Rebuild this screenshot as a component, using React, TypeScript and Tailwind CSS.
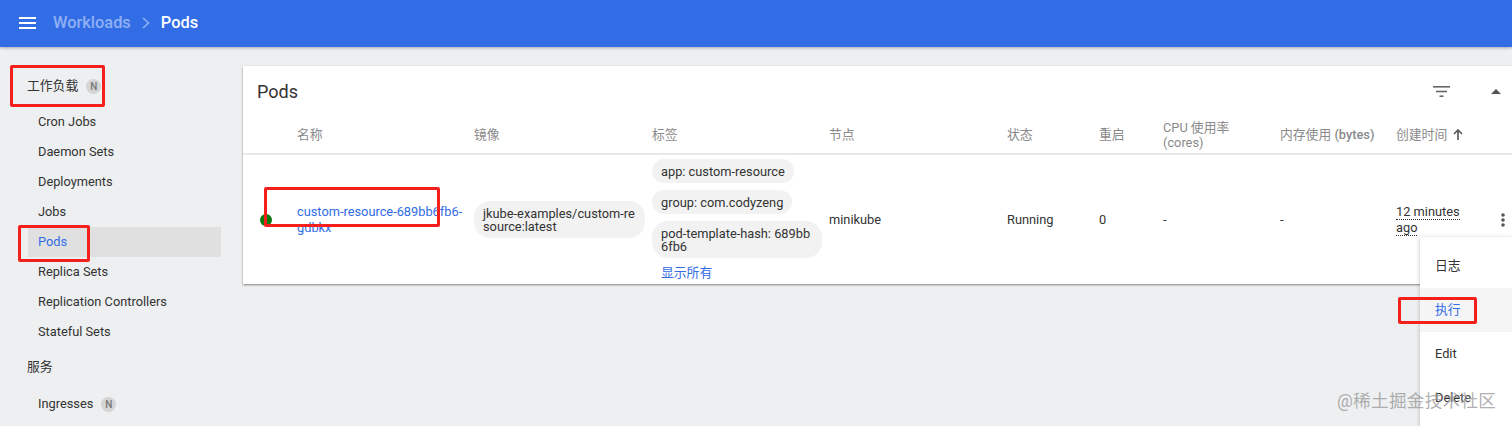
import React from 'react';

const font = "font-['Roboto','Noto_Sans_CJK_SC',sans-serif]";

const workloads = ['Cron Jobs', 'Daemon Sets', 'Deployments', 'Jobs', 'Pods', 'Replica Sets', 'Replication Controllers', 'Stateful Sets'];

const NewBadge: React.FC = () => (
  <span className="ml-2 flex h-[15px] w-[15px] items-center justify-center rounded-full bg-[#d5d5d5] text-[10px] font-medium text-[#777]">N</span>
);

const Chip: React.FC<{ children: React.ReactNode; className?: string }> = ({ children, className }) => (
  <div className={`rounded-[16px] bg-[#f2f2f2] px-[9px] py-[5.5px] text-[12.8px] leading-[13px] text-[#333] ${className ?? ''}`}>{children}</div>
);

const Sidebar: React.FC = () => (
  <aside className="w-[243px] shrink-0 pt-[29px] pl-[28px] pr-[22px] text-[12.8px] text-[#333]">
    <div className="flex h-[20px] items-center">
      <span className="-ml-px">工作负载</span>
      <NewBadge />
    </div>
    <ul className="mt-[11px]">
      {workloads.map((name) => (
        <li key={name} className={`flex h-[30px] items-center pl-[10px] ${name === 'Pods' ? 'bg-[#e0e0e0] text-[#326de6]' : ''}`}>
          {name}
        </li>
      ))}
    </ul>
    <div className="-ml-px mt-[10px] flex h-[20px] items-center">服务</div>
    <div className="mt-[12px] flex h-[30px] items-center pl-[10px]">
      Ingresses
      <NewBadge />
    </div>
  </aside>
);

const PodsCard: React.FC = () => {
  const head = 'text-[12.8px] text-[#8a8a8a]';
  return (
    <section className="h-[218px] bg-white shadow-[0_1px_2px_rgba(0,0,0,0.45)]">
      <div className="flex h-[50px] items-center justify-between pl-[14px]">
        <h1 className="text-[18px] text-[#333]">Pods</h1>
        <div className="flex items-center">
          <svg width="17" height="11" viewBox="0 0 17 11" className="mr-[41px]" fill="#666">
            <rect x="0" y="0" width="17" height="1.6" />
            <rect x="3" y="4.7" width="11" height="1.6" />
            <rect x="6.5" y="9.4" width="4" height="1.6" />
          </svg>
          <svg width="10" height="5" viewBox="0 0 10 5" className="mr-[11px]" fill="#555">
            <path d="M0 5 L5 0 L10 5 Z" />
          </svg>
        </div>
      </div>
      <div className="grid h-[39px] grid-cols-[54px_177px_178px_177px_178px_92px_64px_117px_116px_100px_1fr] items-center border-b-2 border-[#e8e8e8]">
        <span />
        <span className={head}>名称</span>
        <span className={head}>镜像</span>
        <span className={head}>标签</span>
        <span className={head}>节点</span>
        <span className={head}>状态</span>
        <span className={head}>重启</span>
        <span className={`${head} leading-[15px]`}>
          CPU 使用率
          <br />
          (cores)
        </span>
        <span className={head}>
          内存使用 <span className="font-medium">(bytes)</span>
        </span>
        <span className={`${head} flex items-center`}>
          创建时间
          <svg width="10" height="11" viewBox="0 0 10 11" className="ml-[6px]" fill="none" stroke="#555" strokeWidth="1.6">
            <path d="M5 11 V1 M1 5 L5 1 L9 5" />
          </svg>
        </span>
        <span />
      </div>
      <div className="grid h-[129px] grid-cols-[54px_177px_178px_177px_178px_92px_64px_117px_116px_100px_1fr] items-center text-[12.8px] text-[#333]">
        <span className="ml-[17px] h-[12px] w-[12px] rounded-full bg-[#0f7a0f]" />
        <a className="w-[170px] leading-[16px] text-[#326de6]">custom-resource-689bb6fb6-gdbkx</a>
        <Chip className="w-[171px] break-all">jkube-examples/custom-resource:latest</Chip>
        <div className="flex flex-col items-start gap-[7px]">
          <Chip>app: custom-resource</Chip>
          <Chip>group: com.codyzeng</Chip>
          <Chip className="w-[170px] break-all">pod-template-hash: 689bb6fb6</Chip>
          <span className="ml-[9px] leading-[15px] text-[#326de6]">显示所有</span>
        </div>
        <span>minikube</span>
        <span>Running</span>
        <span>0</span>
        <span>-</span>
        <span>-</span>
        <span className="w-[80px] leading-[16px]">
          <span className="border-b border-dotted border-[#333]">12 minutes</span>{' '}
          <span className="border-b border-dotted border-[#333]">ago</span>
        </span>
        <svg width="4" height="14" viewBox="0 0 4 14" fill="#555" className="ml-[5px]">
          <circle cx="2" cy="2" r="1.8" />
          <circle cx="2" cy="7" r="1.8" />
          <circle cx="2" cy="12" r="1.8" />
        </svg>
      </div>
    </section>
  );
};

const RedBox: React.FC<{ className: string }> = ({ className }) => (
  <div className={`pointer-events-none absolute rounded-[2px] border-[3px] border-[#f5201b] ${className}`} />
);

const App: React.FC = () => {
  return (
    <div className={`relative flex h-[426px] w-[1512px] flex-col overflow-hidden bg-[#edeff1] ${font}`}>
      <header className="z-10 flex h-[47px] shrink-0 items-center bg-[#326de6] pb-[1px] pl-[19px] shadow-[0_1px_3px_rgba(0,0,0,0.3)]">
        <svg width="17" height="12" viewBox="0 0 17 12" fill="#fff">
          <rect width="17" height="2" />
          <rect y="5" width="17" height="2" />
          <rect y="10" width="17" height="2" />
        </svg>
        <span className="ml-[17px] text-[16.4px] font-medium text-[#8fb0f2]">Workloads</span>
        <svg width="8" height="12" viewBox="0 0 8 12" fill="none" stroke="#8fb0f2" strokeWidth="1.6" className="mx-[11px]">
          <path d="M1 1 L6.5 6 L1 11" />
        </svg>
        <span className="text-[16.4px] font-medium text-white">Pods</span>
      </header>
      <div className="flex flex-1">
        <Sidebar />
        <main className="flex-1 pt-[19px]">
          <PodsCard />
        </main>
      </div>

      {/* row action menu */}
      <div className="absolute left-[1420px] top-[237px] h-[189px] w-[92px] bg-white pt-[7px] text-[12.8px] text-[#333] shadow-[0_1px_4px_rgba(0,0,0,0.25)]">
        {['日志', '执行', 'Edit', 'Delete'].map((item) => (
          <div key={item} className={`flex h-[44px] items-center pl-[15px] ${item === '执行' ? 'bg-[#f5f5f5] text-[#326de6]' : ''}`}>
            {item}
          </div>
        ))}
      </div>

      {/* annotations on the screenshot */}
      <RedBox className="left-[10px] top-[65px] h-[42px] w-[95px]" />
      <RedBox className="left-[18px] top-[225px] h-[37px] w-[72px]" />
      <RedBox className="left-[264px] top-[187px] h-[40px] w-[176px]" />
      <RedBox className="left-[1398px] top-[297px] h-[27px] w-[79px]" />
      <div className="absolute left-[1337px] top-[388px] text-[17.6px] tracking-[0.3px] text-[#9a9a9a]/80">@稀土掘金技术社区</div>
    </div>
  );
};

export default App;
